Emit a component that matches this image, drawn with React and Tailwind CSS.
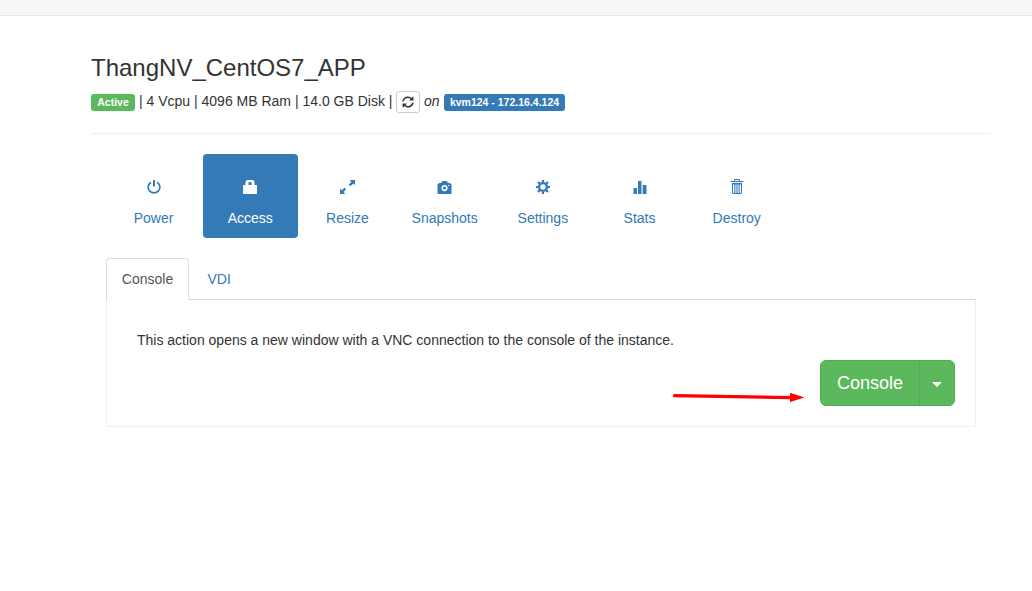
const PowerIcon = () => (
  <svg viewBox="0 0 14 14" className="h-3.5 w-3.5" fill="none" stroke="currentColor">
    <path d="M4 2.200a5.800 5.800 0 1 0 6 0" strokeWidth="1.700" />
    <path d="M7 0v6.600" strokeWidth="2" />
  </svg>
);

const LockIcon = () => (
  <svg viewBox="0 0 14 14" className="h-3.5 w-3.5" fill="currentColor">
    <path fillRule="evenodd" d="M0 14V5.500Q0 5 .5 5H2.500V2.500Q2.500 0 5 0H9Q11.500 0 11.500 2.500V5h2Q14 5 14 5.500V14ZM5.500 5H8.500V3Q8.500 2 7.500 2h-1Q5.500 2 5.500 3Z" />
  </svg>
);

const ResizeIcon = () => (
  <svg viewBox="0 0 15 14" className="h-3.5 w-[15px]" fill="currentColor">
    <path d="M9.500 0H15v5.200l-1.700-1.600-3 2.700-1.600-1.600L11.500 1.800ZM0 14V8.500l1.700 1.700 2.800-2.500 1.600 1.600L3.500 12l1.800 2Z" />
  </svg>
);

const CameraIcon = () => (
  <svg viewBox="0 0 15 13" className="h-[13px] w-[15px]" fill="currentColor">
    <path fillRule="evenodd" d="M6 0h3q.8 0 1.200.700L11 2h2L14.500 3.800V12q0 1-1 1H1.500q-1 0-1-1V3.800L2 2h2L4.800.700Q5.200 0 6 0ZM7.500 4a3.100 3.100 0 1 0 0 6.200 3.100 3.100 0 0 0 0-6.200ZM11 3.900v1.200h1.200V3.900Z" />
    <circle cx="7.500" cy="7.100" r="1.500" />
  </svg>
);

const CogIcon = () => (
  <svg viewBox="0 0 14 14" className="h-3.5 w-3.5" fill="none" stroke="currentColor">
    <circle cx="7" cy="7" r="3.900" strokeWidth="2.400" />
    <path d="M7 0v2.600M7 11.400V14M0 7h2.600M11.400 7H14M2.050 2.050l1.800 1.800M10.150 10.150l1.800 1.800M2.050 11.950l1.800-1.800M10.150 3.850l1.800-1.800" strokeWidth="2.200" />
  </svg>
);

const StatsIcon = () => (
  <svg viewBox="0 0 14 13" className="h-[13px] w-3.5" fill="currentColor">
    <path d="M.500 13V7.500q0-.5.500-.5h2.500q.5 0 .5.500V13ZM5 13V.500Q5 0 5.500 0H8q.5 0 .5.500V13ZM9.700 13V4.500q0-.5.500-.5h2.800q.5 0 .5.500V13Z" />
  </svg>
);

const TrashIcon = () => (
  <svg viewBox="0 0 14 16" className="h-4 w-3.5" fill="none" stroke="currentColor">
    <path d="M.500 2.500h13M4.500 2V.500h5V2" />
    <path d="M2 4.700h10" strokeWidth="1.600" />
    <path d="M2.500 4v9.500q0 1 1 1h7q1 0 1-1V4M4.900 5v9M7 5v9M9.100 5v9" strokeWidth="1.100" />
  </svg>
);

const RefreshIcon = () => (
  <svg viewBox="0 0 12 12" className="h-3 w-3" fill="currentColor">
    <path d="M.2 5.400C.6 2.500 2.800.4 5.700.4c1.500 0 2.700.5 3.700 1.500L11.200.2 11.600 4.600H7.200l1.300-1.500C7.700 2.300 6.900 2 5.800 2 3.900 2 2.500 3.200 1.900 5.200ZM11.800 6.600c-.4 2.900-2.600 5-5.500 5-1.500 0-2.700-.5-3.700-1.500L.8 11.800.4 7.400h4.400L3.500 8.900c.8.8 1.600 1.100 2.700 1.100 1.900 0 3.300-1.200 3.900-3.200Z" />
  </svg>
);

const actions = [
  { label: "Power", Icon: PowerIcon },
  { label: "Access", Icon: LockIcon, active: true, shift: "pr-px" },
  { label: "Resize", Icon: ResizeIcon, shift: "pr-px" },
  { label: "Snapshots", Icon: CameraIcon, shift: "pr-px" },
  { label: "Settings", Icon: CogIcon, shift: "pl-px" },
  { label: "Stats", Icon: StatsIcon },
  { label: "Destroy", Icon: TrashIcon },
];

export default function App() {
  return (
    <div className="min-h-screen bg-white font-['Liberation_Sans',Arial,sans-serif] text-[14px] leading-5 text-[#333]">
      <header className="h-4 border-b border-[#e7e7e7] bg-[#f8f8f8]" />
      <main className="ml-[91px] w-[900px] pt-[39px]">
        <h3 className="text-[24px] leading-[26px]">ThangNV_CentOS7_APP</h3>
        <div className="mt-2.5 flex h-[22px] items-center whitespace-pre">
          <span className="mt-px flex h-[17px] w-11 items-center justify-center rounded-[3px] bg-[#5cb85c] text-[10.5px] font-bold leading-none text-white">Active</span>
          <span className="ml-1 w-[253px] -translate-y-px">| 4 Vcpu | 4096 MB Ram | 14.0 GB Disk |</span>
          <button className="ml-1 flex h-[22px] w-6 items-center justify-center rounded-[3px] border border-[#ccc] bg-white pb-px"><RefreshIcon /></button>
          <em className="ml-1 w-4 -translate-y-px">on</em>
          <span className="ml-1 mt-px flex h-[17px] w-[121px] items-center justify-center rounded-[3px] bg-[#337ab7] text-[10.5px] font-bold leading-none text-white">kvm124 - 172.16.4.124</span>
        </div>
        <hr className="mt-5 border-[#eee]" />
        <section className="px-[15px] pt-5">
          <nav className="flex gap-[2px]">
            {actions.map(({ label, Icon, active, shift = "" }) => (
              <a key={label} className={`flex h-[84px] w-[95.200px] flex-col items-center rounded-[4px] pt-[25px] ${shift} ${active ? "bg-[#337ab7] text-white" : "text-[#337ab7]"}`}>
                <span className="flex h-4 items-center"><Icon /></span>
                <span className="mt-[13px]">{label}</span>
              </a>
            ))}
          </nav>
          <div className="mt-5 flex h-[42px] border-b border-[#ddd]">
            <a className="flex h-[42px] w-[83px] items-center justify-center rounded-t-[4px] border border-[#ddd] border-b-white bg-white text-[#555]">Console</a>
            <a className="ml-[18.500px] flex items-center pt-px text-[#337ab7]">VDI</a>
          </div>
          <div className="relative h-[127px] border border-t-0 border-[#eee] px-5 pt-[30px]">
            <p className="ml-2.5">This action opens a new window with a VNC connection to the console of the instance.</p>
            <div className="ml-auto mt-2.5 flex h-[46px] w-[135px] rounded-[6px] border border-[#4cae4c] bg-[#5cb85c] text-white">
              <button className="w-[99px] border-r border-[#4cae4c] text-[18px]">Console</button>
              <button className="flex flex-1 items-center justify-center pt-0.5" aria-label="More consoles">
                <svg viewBox="0 0 10 5" className="h-[5px] w-2.5" fill="currentColor"><path d="M0 0h10L5 5Z" /></svg>
              </button>
            </div>
            <svg viewBox="0 0 134 12" className="absolute left-[565px] top-[92px] h-3 w-[134px]" fill="red">
              <path d="M2.500 2.100 118 3.900V.8L132.500 5.500 118 9.900V7.300L2.500 5.200a1.550 1.550 0 0 1 0-3.100Z" />
            </svg>
          </div>
        </section>
      </main>
    </div>
  );
}
